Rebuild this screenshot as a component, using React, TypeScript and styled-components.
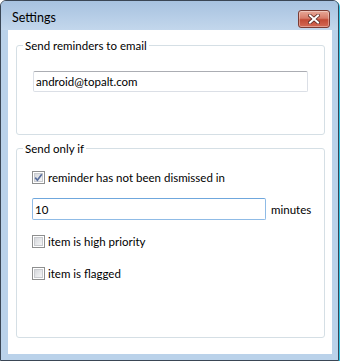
import React from "react";
import styled, { createGlobalStyle } from "styled-components";

const GlobalStyle = createGlobalStyle`
  html, body {
    margin: 0;
    padding: 0;
    background: #fff;
  }
  body {
    font-family: Lato, "Noto Sans", sans-serif;
    font-size: 11.5px;
    color: #000;
  }
`;

const Window = styled.div`
  width: 339px;
  height: 361px;
  box-sizing: border-box;
  border: 1px solid #3a4655;
  border-radius: 6px 6px 0 0;
  background: #bad2ea;
  box-shadow: 1px 1px 0 #2fc6e8;
  display: flex;
  flex-direction: column;
  overflow: hidden;
`;

const TitleBar = styled.div`
  height: 29px;
  flex: none;
  box-sizing: border-box;
  padding: 9px 8px 0 11px;
  display: flex;
  align-items: flex-start;
  justify-content: space-between;
  background: linear-gradient(#a7c2e0, #c3d7ec);
`;

const Title = styled.span`
  font-size: 12.5px;
  line-height: 16px;
  color: #000;
`;

const CloseButton = styled.button`
  width: 32px;
  height: 18px;
  padding: 0;
  box-sizing: border-box;
  border: 1px solid #7a3b33;
  border-radius: 3px;
  background: linear-gradient(#e7a898 0%, #d77c6a 45%, #c24a35 55%, #d46a55 100%);
  box-shadow: inset 0 0 0 1px rgba(255, 255, 255, 0.35);
  display: flex;
  align-items: center;
  justify-content: center;
`;

const Client = styled.div`
  flex: 1;
  margin: 0 6px 6px 7px;
  background: #fff;
  padding: 15px 7px 0 8px;
  display: flex;
  flex-direction: column;
  gap: 13px;
`;

const GroupBox = styled.div<{ $height: number; $inset: number }>`
  height: ${(p) => p.$height}px;
  box-sizing: border-box;
  border: 1px solid #d5dfe5;
  border-radius: 3px;
  box-shadow: inset 1px 1px 0 #fff;
  padding: 0 ${(p) => p.$inset}px;
  display: flex;
  flex-direction: column;
`;

const Legend = styled.span<{ $inset: number }>`
  align-self: flex-start;
  margin: -8px 0 0 ${(p) => 6 - p.$inset}px;
  padding: 0 2px;
  background: #fff;
  line-height: 15px;
`;

const TextBox = styled.input<{ $focused?: boolean; $width?: number }>`
  box-sizing: border-box;
  height: ${(p) => (p.$focused ? 22 : 21)}px;
  width: ${(p) => (p.$width ? `${p.$width}px` : "100%")};
  flex: none;
  border: 1px solid ${(p) => (p.$focused ? "#8fbbe6" : "#dbdfe6")};
  border-top-color: ${(p) => (p.$focused ? "#6fa7dd" : "#abadb3")};
  border-radius: 2px;
  padding: 0 2px;
  font: inherit;
  color: #000;
  outline: none;
  background: #fff;
`;

const Rows = styled.div`
  margin-top: 10px;
  display: flex;
  flex-direction: column;
  gap: 10px;
`;

const Row = styled.label`
  height: 22px;
  display: flex;
  align-items: center;
  gap: 3px;
`;

const BoxFace = styled.span`
  width: 13px;
  height: 13px;
  flex: none;
  box-sizing: border-box;
  border: 1px solid #8e8f8f;
  background: #fff;
  padding: 1px;
  display: flex;
`;

const BoxInner = styled.span`
  flex: 1;
  border: 1px solid #c9cbcf;
  background: linear-gradient(135deg, #d6d8dc, #f4f5f6);
  display: flex;
  align-items: center;
  justify-content: center;
`;

const Unit = styled.span`
  margin-left: 2px;
`;

function CloseGlyph() {
  return (
    <svg width="12" height="10" viewBox="0 0 12 10">
      <path d="M2 1.5 L10 8.5 M10 1.5 L2 8.5" stroke="#5a2a24" strokeWidth="3.6" strokeLinecap="square" />
      <path d="M2 1.5 L10 8.5 M10 1.5 L2 8.5" stroke="#fff" strokeWidth="2" strokeLinecap="square" />
    </svg>
  );
}

function CheckBox({ checked, label }: { checked?: boolean; label: string }) {
  return (
    <Row>
      <BoxFace>
        <BoxInner>
          {checked && (
            <svg width="9" height="9" viewBox="0 0 9 9" style={{ margin: -1 }}>
              <path d="M1.2 4.6 L3.4 7.2 L7.8 1.2" fill="none" stroke="#5a6f9e" strokeWidth="1.7" />
            </svg>
          )}
        </BoxInner>
      </BoxFace>
      <span>{label}</span>
    </Row>
  );
}

export default function App() {
  return (
    <>
      <GlobalStyle />
      <Window>
        <TitleBar>
          <Title>Settings</Title>
          <CloseButton aria-label="Close">
            <CloseGlyph />
          </CloseButton>
        </TitleBar>
        <Client>
          <GroupBox $height={90} $inset={16}>
            <Legend $inset={16}>Send reminders to email</Legend>
            <TextBox defaultValue="android@topalt.com" style={{ marginTop: 18 }} />
          </GroupBox>
          <GroupBox $height={190} $inset={15}>
            <Legend $inset={15}>Send only if</Legend>
            <Rows>
              <CheckBox checked label="reminder has not been dismissed in" />
              <Row>
                <TextBox $focused $width={234} defaultValue="10" />
                <Unit>minutes</Unit>
              </Row>
              <CheckBox label="item is high priority" />
              <CheckBox label="item is flagged" />
            </Rows>
          </GroupBox>
        </Client>
      </Window>
    </>
  );
}
